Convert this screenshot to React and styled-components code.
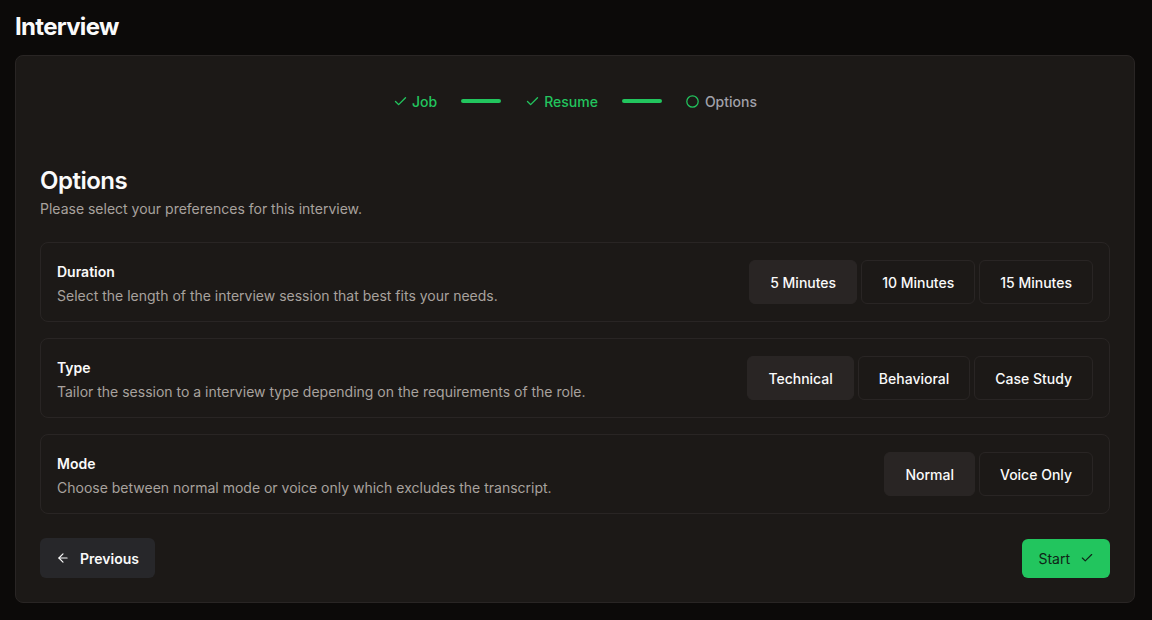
import React, { useState } from "react";
import styled, { createGlobalStyle } from "styled-components";

const Global = createGlobalStyle`
  html, body { margin: 0; padding: 0; background: #0c0a09; }
  body { font-family: Inter, "Noto Sans", sans-serif; color: #fafaf9; -webkit-font-smoothing: antialiased; }
  * { box-sizing: border-box; }
`;

const Page = styled.div`
  padding: 11px 17px 16px 15px;
  min-height: 620px;
`;

const PageTitle = styled.h1`
  margin: 0 0 12px 0;
  font-size: 24px;
  line-height: 32px;
  font-weight: 700;
  letter-spacing: -0.7px;
  color: #fafafa;
`;

const Card = styled.div`
  background: #1c1917;
  border: 1px solid #292524;
  border-radius: 8px;
  padding: 24px;
  display: flex;
  flex-direction: column;
`;

const Stepper = styled.div`
  display: flex;
  justify-content: center;
  align-items: center;
  gap: 24px;
  height: 42px;
  margin-bottom: 43px;
`;

const Step = styled.div`
  display: flex;
  align-items: center;
  gap: ${(p) => (p.$done ? "4px" : "6px")};
  font-size: 14px;
  font-weight: 500;
  color: ${(p) => (p.$done ? "#22c55e" : "#a1a1aa")};
`;

const Connector = styled.div`
  width: 40px;
  height: 4px;
  border-radius: 2px;
  background: #22c55e;
`;

const Heading = styled.h2`
  margin: 0;
  font-size: 24px;
  line-height: 32px;
  font-weight: 600;
  letter-spacing: -0.5px;
  color: #fafafa;
`;

const Sub = styled.p`
  margin: 2px 0 23px 0;
  font-size: 14px;
  line-height: 20px;
  color: #a8a29e;
`;

const Rows = styled.div`
  display: flex;
  flex-direction: column;
  gap: 16px;
`;

const Row = styled.div`
  border: 1px solid #292524;
  border-radius: 8px;
  padding: 15px 16px;
  min-height: 80px;
  display: flex;
  align-items: center;
  justify-content: space-between;
`;

const RowText = styled.div`
  display: flex;
  flex-direction: column;
  gap: 4px;
  padding-top: 4px;
`;

const RowTitle = styled.div`
  font-size: 14px;
  line-height: 20px;
  font-weight: 600;
  color: #fafafa;
`;

const RowDesc = styled.div`
  font-size: 14px;
  line-height: 20px;
  color: #a8a29e;
`;

const Choices = styled.div`
  display: flex;
  gap: 4px;
`;

const Choice = styled.button`
  font-family: inherit;
  height: 44px;
  padding: 0 20px;
  font-size: 14px;
  font-weight: 500;
  color: #fafafa;
  border-radius: 6px;
  border: 1px solid #292524;
  background: ${(p) => (p.$active ? "#292524" : "transparent")};
  cursor: pointer;
`;

const Footer = styled.div`
  display: flex;
  justify-content: space-between;
  align-items: center;
  margin-top: 24px;
`;

const PrevButton = styled.button`
  font-family: inherit;
  display: flex;
  align-items: center;
  gap: 10px;
  height: 40px;
  padding: 0 16px;
  border: none;
  border-radius: 6px;
  background: #27272a;
  color: #fafafa;
  font-size: 14px;
  font-weight: 600;
`;

const StartButton = styled.button`
  font-family: inherit;
  display: flex;
  align-items: center;
  gap: 10px;
  height: 39px;
  padding: 0 16px;
  border: none;
  border-radius: 6px;
  background: #22c55e;
  color: #0f2417;
  font-size: 14px;
  font-weight: 400;
`;

const Check = ({ size = 15, sw = 2.2 }) => (
  <svg width={size} height={size} viewBox="0 0 24 24" fill="none" stroke="currentColor" strokeWidth={sw} strokeLinecap="round" strokeLinejoin="round">
    <path d="M20 6 9 17l-5-5" />
  </svg>
);

const Circle = () => (
  <svg width="13" height="13" viewBox="0 0 24 24" fill="none" stroke="#22c55e" strokeWidth="2.3">
    <circle cx="12" cy="12" r="10.5" />
  </svg>
);

const ArrowLeft = () => (
  <svg width="14" height="14" viewBox="0 0 24 24" fill="none" stroke="currentColor" strokeWidth="2" strokeLinecap="round" strokeLinejoin="round">
    <path d="m12 19-7-7 7-7" />
    <path d="M19 12H5" />
  </svg>
);

const groups = [
  {
    title: "Duration",
    desc: "Select the length of the interview session that best fits your needs.",
    options: ["5 Minutes", "10 Minutes", "15 Minutes"],
  },
  {
    title: "Type",
    desc: "Tailor the session to a interview type depending on the requirements of the role.",
    options: ["Technical", "Behavioral", "Case Study"],
  },
  {
    title: "Mode",
    desc: "Choose between normal mode or voice only which excludes the transcript.",
    options: ["Normal", "Voice Only"],
  },
];

export default function App() {
  const [sel, setSel] = useState([0, 0, 0]);
  return (
    <>
      <Global />
      <Page>
        <PageTitle>Interview</PageTitle>
        <Card>
          <Stepper>
            <Step $done>
              <Check />
              Job
            </Step>
            <Connector />
            <Step $done>
              <Check />
              Resume
            </Step>
            <Connector />
            <Step>
              <Circle />
              Options
            </Step>
          </Stepper>
          <Heading>Options</Heading>
          <Sub>Please select your preferences for this interview.</Sub>
          <Rows>
            {groups.map((g, gi) => (
              <Row key={g.title}>
                <RowText>
                  <RowTitle>{g.title}</RowTitle>
                  <RowDesc>{g.desc}</RowDesc>
                </RowText>
                <Choices>
                  {g.options.map((o, oi) => (
                    <Choice
                      key={o}
                      $active={sel[gi] === oi}
                      onClick={() => setSel(sel.map((v, i) => (i === gi ? oi : v)))}
                    >
                      {o}
                    </Choice>
                  ))}
                </Choices>
              </Row>
            ))}
          </Rows>
          <Footer>
            <PrevButton>
              <ArrowLeft />
              Previous
            </PrevButton>
            <StartButton>
              Start
              <Check size={14} sw={2} />
            </StartButton>
          </Footer>
        </Card>
      </Page>
    </>
  );
}
